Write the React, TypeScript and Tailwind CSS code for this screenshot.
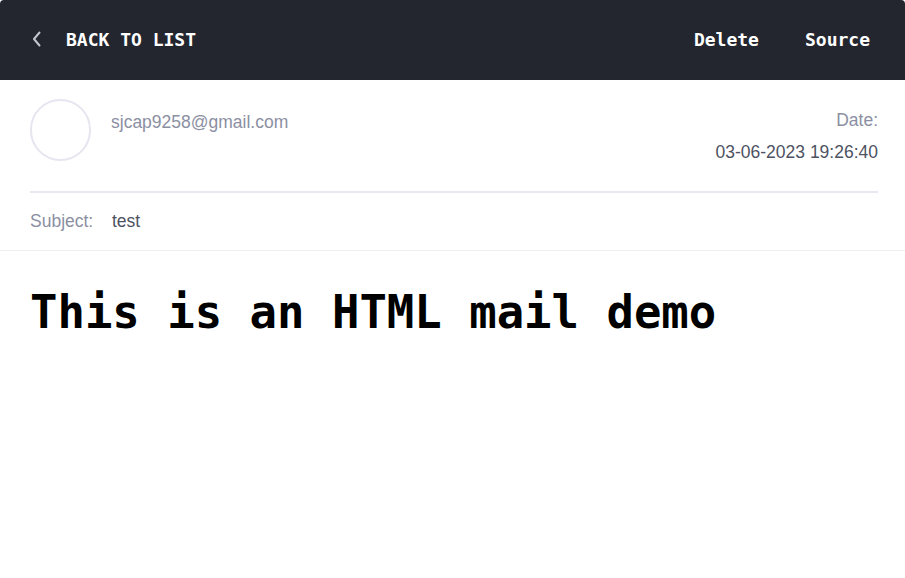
const mono = { fontFamily: '"DejaVu Sans Mono", monospace' };

const App = () => {
  return (
    <div className="w-full h-screen bg-white">
      <div className="w-full h-full rounded-[4px] overflow-hidden bg-white flex flex-col">
        {/* top bar */}
        <div className="h-[80px] bg-[#23262f] flex items-center justify-between pl-[32px] pr-[35px] pb-[2px] text-white font-bold text-[18px]" style={mono}>
          <button className="flex items-center">
            <svg width="9" height="16" viewBox="0 0 9 16" className="mr-[25px]">
              <polyline points="7.5,1.5 2,8 7.5,14.5" fill="none" stroke="#c4c6ce" strokeWidth="2" strokeLinecap="round" strokeLinejoin="round" />
            </svg>
            <span>BACK TO LIST</span>
          </button>
          <div className="flex items-center gap-[46px]">
            <button>Delete</button>
            <button>Source</button>
          </div>
        </div>

        {/* mail header */}
        <div className="border-b border-[#eeeef2]" style={{ fontFamily: '"Liberation Sans", Arial, sans-serif' }}>
          <div className="ml-[30px] mr-[27px] pt-[19px] pb-[29px] flex justify-between border-b-2 border-[#e8e8f0]">
            <div className="flex">
              <div className="w-[61px] h-[62px] rounded-full border-2 border-[#e6e5f0]" />
              <div className="ml-[20px] mt-[13px] text-[17.5px] leading-[20px] text-[#8b8fa2]">sjcap9258@gmail.com</div>
            </div>
            <div className="text-right text-[17.5px] leading-[20px] mt-[11px]">
              <div className="text-[#8b8fa2]">Date:</div>
              <div className="text-[#4d5262] mt-[11.5px]">03-06-2023 19:26:40</div>
            </div>
          </div>
          <div className="ml-[30px] mr-[27px] flex items-center h-[57px] text-[17.5px] leading-[20px]">
            <span className="text-[#8b8fa2] w-[82px]">Subject:</span>
            <span className="text-[#4d5262]">test</span>
          </div>
        </div>

        {/* mail body */}
        <div className="px-[30px] pt-[39px]">
          <h1 className="text-[45.6px] leading-none font-bold text-black" style={mono}>This is an HTML mail demo</h1>
        </div>
      </div>
    </div>
  );
};

export default App;
